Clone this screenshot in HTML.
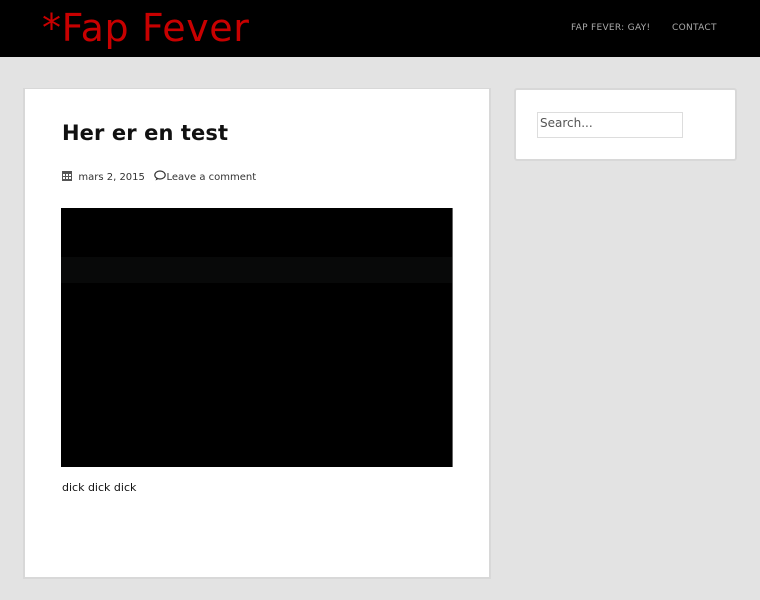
<!DOCTYPE html>
<html><head><meta charset="utf-8"><style>
*{margin:0;padding:0;box-sizing:border-box}
body{width:760px;height:600px;background:#e3e3e3;font-family:"DejaVu Sans","Liberation Sans",sans-serif;position:relative;overflow:hidden}
.hdr{position:absolute;left:0;top:0;width:760px;height:57px;background:#000}
.logo{position:absolute;left:42px;top:4px;color:#c80000;font-size:38px;line-height:48px;font-family:"DejaVu Sans",sans-serif;letter-spacing:0.6px}
.nav{position:absolute;top:23px;font-size:9px;color:#aaa;letter-spacing:0.3px}
.card{position:absolute;left:23px;top:88px;width:468px;height:491px;background:#fff;border:2px solid #d8d8d8;border-top:1px solid #d8d8d8}
.side{position:absolute;left:514px;top:88px;width:223px;height:73px;background:#fff;border:2px solid #d8d8d8;border-radius:3px}
h1{position:absolute;left:62px;top:121px;font-size:21px;font-weight:bold;color:#111;letter-spacing:0.1px}
.meta{position:absolute;left:62px;top:170px;font-size:10px;color:#333}
.vid{position:absolute;left:61px;top:208px;width:392px;height:259px;background:#000;border-right:1px solid #666}
.band{position:absolute;left:0;top:49px;width:391px;height:26px;background:#080909}
.txt{position:absolute;left:62px;top:481px;font-size:11px;color:#111}
.inp{position:absolute;left:537px;top:112px;width:146px;height:26px;border:1px solid #ddd;font-size:12px;color:#555;padding:3px 2px}
</style></head><body>
<div class="hdr"><div class="logo">*Fap Fever</div>
<div class="nav" style="left:571px">FAP FEVER: GAY!</div>
<div class="nav" style="left:672px">CONTACT</div></div>
<div class="card"></div>
<div class="side"></div>
<h1>Her er en test</h1>
<div class="meta">
<svg width="10" height="11" viewBox="0 0 10 11" style="vertical-align:-1px"><rect x="0" y="1" width="10" height="10" fill="#555"/><g fill="#fff"><rect x="1" y="4" width="2" height="2"/><rect x="4" y="4" width="2" height="2"/><rect x="7" y="4" width="2" height="2"/><rect x="1" y="7" width="2" height="2"/><rect x="4" y="7" width="2" height="2"/><rect x="7" y="7" width="2" height="2"/></g></svg>
&nbsp;mars 2, 2015 &nbsp;&nbsp;<svg width="12" height="11" viewBox="0 0 12 11" style="vertical-align:-1px"><ellipse cx="6" cy="5" rx="5.2" ry="4" fill="none" stroke="#333" stroke-width="1.2"/><path d="M2.5 8 L1.5 10.5 L5 8.8" fill="#333"/></svg>Leave a comment</div>
<div class="vid"><div class="band"></div></div>
<div class="txt">dick dick dick</div>
<div class="inp">Search...</div>
</body></html>
